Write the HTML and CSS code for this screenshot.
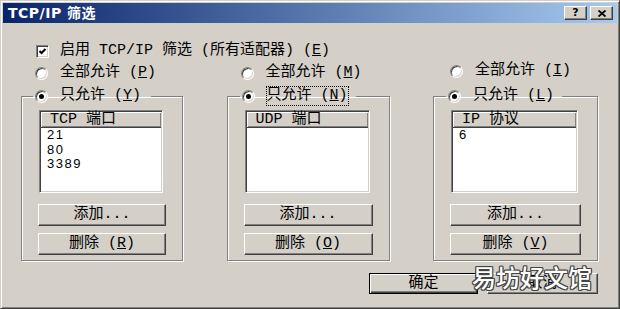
FILE: index.html
```html
<!DOCTYPE html>
<html lang="zh-CN">
<head>
    <meta charset="UTF-8">
    <title>TCP/IP 筛选</title>
    <link rel="stylesheet" href="styles.css">
</head>
<body>
    <div class="window">
        <div class="titlebar">
            <span class="title">TCP/IP 筛选</span>
            <div class="title-buttons">
                <span class="tbtn">?</span>
                <span class="tbtn">
                    <svg width="8" height="7" viewBox="0 0 8 7"><path d="M0.5 0.5 L7.5 6.5 M7.5 0.5 L0.5 6.5" stroke="#000" stroke-width="1.8" fill="none"/></svg>
                </span>
            </div>
        </div>

        <div class="content">
            <div class="check-row">
                <span class="checkbox">
                    <svg width="9" height="9" viewBox="0 0 9 9"><path d="M1.5 4 L3.5 6 L7.5 2" stroke="#000" stroke-width="2" fill="none"/></svg>
                </span>
                <span>启用 TCP/IP 筛选 (所有适配器) (<u>E</u>)</span>
            </div>

            <div class="columns">
                <div class="col">
                    <div class="radio-row"><span class="radio"></span><span>全部允许 (<u>P</u>)</span></div>
                    <fieldset class="group">
                        <legend><span class="legend-inner"><span class="radio checked"></span><span>只允许 (<u>Y</u>)</span></span></legend>
                        <div class="listbox">
                            <div class="list-head">TCP 端口</div>
                            <div class="list-item">21</div>
                            <div class="list-item">80</div>
                            <div class="list-item">3389</div>
                        </div>
                        <button class="btn btn-add">添加...</button>
                        <button class="btn btn-del">删除 (<u>R</u>)</button>
                    </fieldset>
                </div>

                <div class="col col-mid">
                    <div class="radio-row"><span class="radio"></span><span>全部允许 (<u>M</u>)</span></div>
                    <fieldset class="group">
                        <legend><span class="legend-inner"><span class="radio checked"></span><span class="focus">只允许 (<u>N</u>)</span></span></legend>
                        <div class="listbox">
                            <div class="list-head">UDP 端口</div>
                        </div>
                        <button class="btn btn-add">添加...</button>
                        <button class="btn btn-del">删除 (<u>O</u>)</button>
                    </fieldset>
                </div>

                <div class="col col-right">
                    <div class="radio-row"><span class="radio"></span><span>全部允许 (<u>I</u>)</span></div>
                    <fieldset class="group">
                        <legend><span class="legend-inner"><span class="radio checked"></span><span>只允许 (<u>L</u>)</span></span></legend>
                        <div class="listbox">
                            <div class="list-head">IP 协议</div>
                            <div class="list-item">6</div>
                        </div>
                        <button class="btn btn-add">添加...</button>
                        <button class="btn btn-del">删除 (<u>V</u>)</button>
                    </fieldset>
                </div>
            </div>

            <div class="footer">
                <button class="btn btn-default">确定</button>
                <button class="btn btn-cancel">取消</button>
            </div>
        </div>

        <div class="watermark">易坊好文馆</div>
    </div>
</body>
</html>
```

FILE: styles.css
```css
body {
    margin: 0;
    background: #d4d0c8;
}
.window {
    position: relative;
    box-sizing: border-box;
    width: 620px;
    height: 309px;
    padding: 2px;
    background: #d4d0c8;
    border: 1px solid;
    border-color: #d4d0c8 #404040 #404040 #d4d0c8;
    box-shadow: inset 1px 1px 0 #fff, inset -1px -1px 0 #808080;
    font: 15px/18px "Liberation Mono", "Noto Sans CJK SC", monospace;
    color: #000;
}
.titlebar {
    height: 20px;
    display: flex;
    align-items: center;
    justify-content: space-between;
    padding: 0 4px 0 5px;
    background: linear-gradient(to right, #0a246a, #a6caf0);
}
.title {
    color: #fff;
    font: bold 14px/20px "DejaVu Sans", "Noto Sans CJK SC", sans-serif;
    letter-spacing: 0.5px;
}
.title-buttons {
    display: flex;
    gap: 3px;
}
.tbtn {
    box-sizing: border-box;
    width: 23px;
    height: 14px;
    display: flex;
    align-items: center;
    justify-content: center;
    background: #d4d0c8;
    border: 1px solid;
    border-color: #fff #404040 #404040 #fff;
    box-shadow: inset -1px -1px 0 #808080;
    font: bold 11px/12px "DejaVu Sans", sans-serif;
}
.content {
    padding: 19px 19px 0 18px;
}
.check-row {
    display: flex;
    align-items: center;
    height: 18px;
    padding-left: 15px;
    gap: 11px;
}
.checkbox {
    box-sizing: border-box;
    width: 13px;
    height: 13px;
    display: flex;
    align-items: center;
    justify-content: center;
    background: #fff;
    border: 1px solid;
    border-color: #808080 #fff #fff #808080;
    box-shadow: inset 1px 1px 0 #404040, inset -1px -1px 0 #d4d0c8;
}
.columns {
    display: flex;
    justify-content: space-between;
    margin-top: 4px;
}
.col {
    display: flex;
    flex-direction: column;
    width: 162px;
}
.col-mid {
    width: 163px;
}
.col-right {
    width: 165px;
}
.radio-row {
    display: flex;
    align-items: center;
    height: 18px;
    padding-left: 14px;
    gap: 12px;
}
.col-right .radio-row {
    padding-left: 17px;
    margin-top: -2px;
    margin-bottom: 2px;
}
.radio {
    position: relative;
    flex: none;
    box-sizing: border-box;
    width: 13px;
    height: 13px;
    border-radius: 50%;
    background: #fff;
    border: 1px solid;
    border-color: #808080 #fff #fff #808080;
    box-shadow: inset 1px 1px 0 #404040, inset -1px -1px 0 #d4d0c8;
}
.radio.checked::after {
    content: "";
    position: absolute;
    left: 3px;
    top: 3px;
    width: 5px;
    height: 5px;
    border-radius: 50%;
    background: #000;
}
.group {
    margin: 5px 0 0;
    padding: 5px 16px 5px;
    min-width: 0;
    border: 1px solid #808080;
    box-shadow: inset 1px 1px 0 #fff, 1px 1px 0 #fff;
}
.group legend {
    padding: 0 10px 0 2px;
    margin-left: -5px;
    line-height: 18px;
}
.col-mid .group legend,
.col-right .group legend {
    margin-left: -4px;
    padding-right: 8px;
}
.legend-inner {
    display: flex;
    align-items: center;
    gap: 12px;
    height: 18px;
}
.focus {
    outline: 1px dotted #000;
}
.listbox {
    box-sizing: border-box;
    height: 83px;
    margin: 0 3px 0 1px;
    padding: 1px;
    background: #fff;
    border: 1px solid;
    border-color: #808080 #fff #fff #808080;
    box-shadow: inset 1px 1px 0 #404040, inset -1px -1px 0 #d4d0c8;
}
.list-head {
    height: 15px;
    line-height: 15px;
    padding-left: 9px;
    background: #d4d0c8;
    border-bottom: 1px solid #404040;
    box-shadow: inset 1px 1px 0 #fff, inset -1px -1px 0 #808080;
}
.list-item {
    height: 14.5px;
    padding-left: 6px;
    font: 13px/14.5px "Liberation Sans", sans-serif;
    letter-spacing: 1.5px;
}
.btn {
    display: block;
    box-sizing: border-box;
    width: 100%;
    height: 22px;
    padding: 0;
    background: #d4d0c8;
    border: 1px solid;
    border-color: #fff #404040 #404040 #fff;
    box-shadow: inset -1px -1px 0 #808080;
    font: 15px/18px "Liberation Mono", "Noto Sans CJK SC", monospace;
    color: #000;
}
.btn-add {
    margin-top: 11px;
}
.btn-del {
    margin-top: 7px;
}
.footer {
    display: flex;
    justify-content: flex-end;
    gap: 9px;
    margin-top: 12px;
}
.btn-default {
    width: 109px;
    height: 21px;
    border: 1px solid #000;
    box-shadow: inset 1px 1px 0 #fff, inset -1px -1px 0 #404040, inset -2px -2px 0 #808080;
}
.btn-cancel {
    width: 111px;
    height: 21px;
}
.watermark {
    position: absolute;
    left: 471px;
    top: 262px;
    font: 500 24px/28px "Noto Sans CJK SC", sans-serif;
    color: #fff;
    text-shadow: 1px 0 #444, -1px 0 #444, 0 1px #444, 0 -1px #444,
        1px 1px #444, -1px -1px #444, 1px -1px #444, -1px 1px #444;
}
```
